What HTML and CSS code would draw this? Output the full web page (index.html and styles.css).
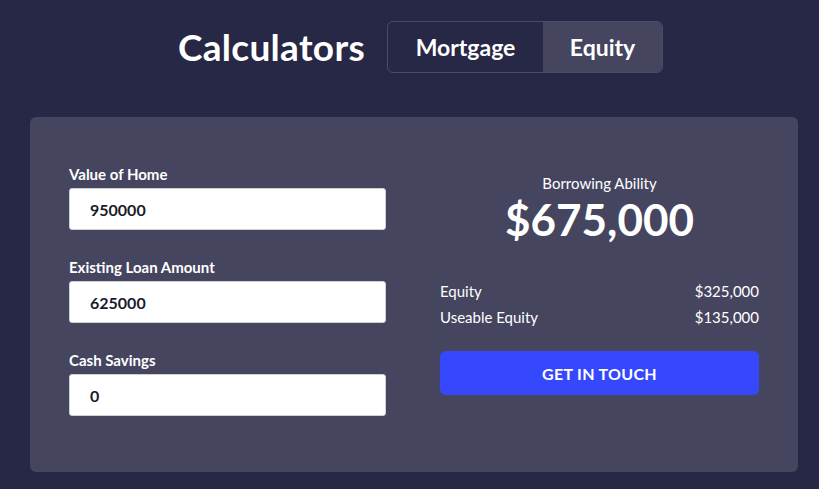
FILE: index.html
```html
<!DOCTYPE html>
<html lang="en">
<head>
<meta charset="utf-8">
<title>Calculators</title>
<link rel="stylesheet" href="styles.css">
</head>
<body>
<header class="top">
  <h1 class="title">Calculators</h1>
  <div class="toggle">
    <button class="tab">Mortgage</button>
    <button class="tab tab-active">Equity</button>
  </div>
</header>
<main class="card">
  <form class="fields">
    <label class="field">
      <span class="field-label">Value of Home</span>
      <input class="field-input" type="text" value="950000">
    </label>
    <label class="field">
      <span class="field-label">Existing Loan Amount</span>
      <input class="field-input" type="text" value="625000">
    </label>
    <label class="field">
      <span class="field-label">Cash Savings</span>
      <input class="field-input" type="text" value="0">
    </label>
  </form>
  <section class="result">
    <div class="result-label">Borrowing Ability</div>
    <div class="result-value">$675,000</div>
    <dl class="rows">
      <div class="row"><dt>Equity</dt><dd>$325,000</dd></div>
      <div class="row"><dt>Useable Equity</dt><dd>$135,000</dd></div>
    </dl>
    <button class="cta">GET IN TOUCH</button>
  </section>
</main>
</body>
</html>
```

FILE: styles.css
```css
* { box-sizing: border-box; }

body {
  margin: 0;
  background: #272746;
  color: #ffffff;
  font-family: Lato, "Open Sans", sans-serif;
}

.top {
  display: flex;
  align-items: flex-start;
  justify-content: center;
  gap: 22px;
  padding: 21px 0 0 22px;
  height: 117px;
}

.title {
  margin: 0;
  font-size: 37px;
  font-weight: 700;
  line-height: 52px;
  letter-spacing: 0.3px;
}

.toggle {
  display: flex;
  height: 52px;
  border: 1px solid #4b4b68;
  border-radius: 6px;
  overflow: hidden;
}

.tab {
  border: 0;
  background: transparent;
  color: #ffffff;
  font-family: inherit;
  font-size: 23px;
  font-weight: 700;
  width: 155px;
  padding: 0;
}

.tab-active {
  background: #45455f;
  width: 119px;
}

.card {
  display: flex;
  gap: 54px;
  width: 768px;
  margin-left: 30px;
  height: 355px;
  padding: 48px 39px 0 39px;
  background: #45455f;
  border-radius: 6px;
}

.fields {
  width: 317px;
  display: flex;
  flex-direction: column;
  gap: 28px;
}

.field {
  display: flex;
  flex-direction: column;
  gap: 5px;
}

.field-label {
  font-size: 15px;
  font-weight: 700;
  line-height: 18px;
}

.field-input {
  height: 42px;
  width: 100%;
  border: 1px solid #cfcfd6;
  border-radius: 3px;
  background: #ffffff;
  padding: 0 20px;
  font-family: inherit;
  font-size: 16px;
  font-weight: 700;
  color: #1a1a2a;
}

.result {
  flex: 1;
  display: flex;
  flex-direction: column;
  padding-top: 9px;
}

.result-label {
  text-align: center;
  font-size: 15px;
  line-height: 18px;
}

.result-value {
  text-align: center;
  font-size: 44px;
  font-weight: 700;
  line-height: 52px;
  margin-top: 1px;
}

.rows {
  margin: 37px 0 0;
  display: flex;
  flex-direction: column;
  gap: 8px;
}

.row {
  display: flex;
  justify-content: space-between;
  font-size: 15px;
  line-height: 18px;
}

.row dt, .row dd { margin: 0; }

.cta {
  margin-top: 25px;
  height: 44px;
  border: 0;
  border-radius: 6px;
  background: #3548fb;
  color: #ffffff;
  font-family: inherit;
  font-size: 16px;
  font-weight: 700;
  letter-spacing: 0.3px;
}
```
